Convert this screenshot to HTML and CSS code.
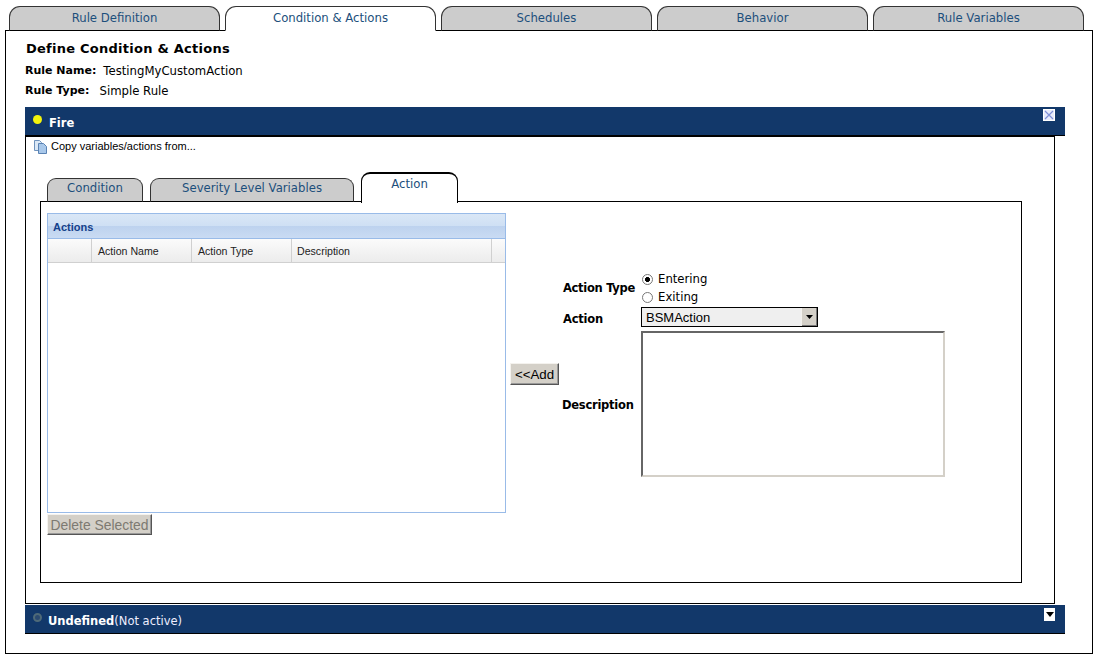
FILE: index.html
```html
<!DOCTYPE html>
<html lang="en">
<head>
<meta charset="utf-8">
<title>Define Condition &amp; Actions</title>
<link rel="stylesheet" href="styles.css">
</head>
<body>
<div class="page">
  <div class="tabs">
    <div class="tab">Rule Definition</div>
    <div class="tab active">Condition &amp; Actions</div>
    <div class="tab">Schedules</div>
    <div class="tab">Behavior</div>
    <div class="tab">Rule Variables</div>
  </div>
  <div class="frame">
    <h1 class="title">Define Condition &amp; Actions</h1>
    <div class="meta meta-name"><b>Rule Name:</b><span>TestingMyCustomAction</span></div>
    <div class="meta meta-type"><b>Rule Type:</b><span>Simple Rule</span></div>

    <div class="bar bar-fire">
      <span class="dot dot-on"></span>
      <span class="bar-title">Fire</span>
      <span class="bar-close">
        <svg width="12" height="12" viewBox="0 0 12 12"><rect width="12" height="12" fill="#e8ecfb"/><rect x=".5" y=".5" width="11" height="11" fill="none" stroke="#fff"/><path d="M2 2l8 8M10 2l-8 8" stroke="#7f8fd8" stroke-width="1.2" fill="none"/></svg>
      </span>
    </div>
    <div class="panel">
      <div class="copy">
        <svg width="15" height="15" viewBox="0 0 15 15"><path d="M1.500 1.500h5l2 2v8h-7z" fill="#dbe8f6" stroke="#6f93bd"/><path d="M5.500 4.500h5l3 3v7h-8z" fill="#a9c8ea" stroke="#5a83b4"/></svg>
        <span>Copy variables/actions from...</span>
      </div>
      <div class="subtabs">
        <div class="subtab st-cond">Condition</div>
        <div class="subtab st-sev">Severity Level Variables</div>
        <div class="subtab st-act active">Action</div>
      </div>
      <div class="subframe">
        <div class="left">
          <div class="grid">
            <div class="grid-title">Actions</div>
            <div class="grid-head">
              <div class="col c0"></div>
              <div class="col c1">Action Name</div>
              <div class="col c1">Action Type</div>
              <div class="col c2">Description</div>
              <div class="col c3"></div>
            </div>
          </div>
          <button class="btn btn-del" type="button" disabled>Delete Selected</button>
        </div>
        <div class="right">
          <button class="btn btn-add" type="button">&lt;&lt;Add</button>
          <div class="form">
            <div class="lbl lbl-type">Action Type</div>
            <div class="radios">
              <label class="radio"><input type="radio" name="t" checked>Entering</label>
              <label class="radio"><input type="radio" name="t">Exiting</label>
            </div>
            <div class="lbl lbl-action">Action</div>
            <div class="select">
              <span>BSMAction</span>
              <span class="arrow"><svg width="7" height="4" viewBox="0 0 7 4"><path d="M0 0h7L3.500 4z" fill="#000"/></svg></span>
            </div>
            <div class="lbl lbl-desc">Description</div>
            <textarea class="desc"></textarea>
          </div>
        </div>
      </div>
    </div>
    <div class="bar bar-undef">
      <span class="dot dot-off"></span>
      <span class="bar-title">Undefined</span><span class="bar-note">(Not active)</span>
      <span class="bar-open">
        <svg width="8" height="5" viewBox="0 0 8 5"><path d="M0 0h8L4 5z" fill="#000"/></svg>
      </span>
    </div>
  </div>
</div>
</body>
</html>
```
FILE: styles.css
```css
* { box-sizing: border-box; }
html, body { margin: 0; padding: 0; background: #fff; }
body { font-family: "DejaVu Sans", Verdana, sans-serif; color: #000; }
.page { width: 1095px; height: 658px; padding: 6px 0 0 5px; overflow: hidden; }

.tabs { display: flex; gap: 5px; height: 25px; padding-left: 4px; position: relative; z-index: 1; }
.tab {
  width: 211px; height: 25px;
  background: #ccc; border: 1px solid #333; border-bottom: 1px solid #000;
  border-radius: 11px 11px 0 0;
  color: #1c4f7c; font-size: 11.700px; line-height: 23px; text-align: center;
}
.tab.active { background: #fff; border-bottom-color: #fff; }

.frame {
  width: 1088px; height: 624px; margin-top: -1px;
  border: 1px solid #000; background: #fff;
  padding: 10px 0 0 19px;
}
.title { margin: 0 0 0 1px; font-size: 13px; line-height: 16px; font-weight: bold; letter-spacing: .25px; }
.meta { display: flex; font-size: 11.700px; line-height: 14px; }
.meta b { font-weight: bold; font-size: 11px; }
.meta-name { margin-top: 7px; gap: 7px; }
.meta-type { margin-top: 6px; gap: 10px; }

.bar { width: 1040px; background: #12386a; color: #fff; display: flex; align-items: flex-start; position: relative; }
.bar-fire { height: 29px; margin-top: 9px; border-bottom: 1px solid #000; }
.bar-undef { height: 29px; margin-top: 1px; border-bottom: 1px solid #000; }
.dot { width: 9px; height: 9px; border-radius: 50%; margin: 8px 7px 0 8px; flex: none; }
.dot-on { background: #f4f40c; }
.dot-off { background: #2b4a70; border: 2px solid #4f6a78; }
.bar-title { font-size: 11.500px; font-weight: bold; line-height: 29px; margin-top: 2px; }
.bar-undef .bar-title { margin: 2px 0 0 -1px; }
.bar-note { font-size: 11.500px; line-height: 29px; margin: 2px 0 0 0; color: #eef; }
.bar-close { position: absolute; left: 1018px; top: 2px; width: 12px; height: 12px; display: block; line-height: 0; }
.bar-open { position: absolute; left: 1019px; top: 3px; width: 11px; height: 13px; background: #fff; display: flex; align-items: center; justify-content: center; }

.panel { width: 1030px; height: 468px; border: 1px solid #000; background: #fff; padding: 2px 0 0 7px; }
.copy { display: flex; align-items: center; gap: 3px; height: 14px; font-family: "Liberation Sans", Arial, sans-serif; font-size: 11px; }
.subtabs { display: flex; align-items: flex-end; height: 30px; margin-top: 19px; padding-left: 14px; position: relative; z-index: 1; }
.subtab {
  height: 24px; background: #ccc; border: 1px solid #333; border-bottom: 1px solid #000;
  border-radius: 9px 9px 0 0; text-align: center;
  color: #1c4f7c; font-size: 11.700px; line-height: 19px;
}
.st-cond { width: 96px; }
.st-sev { width: 204px; margin-left: 7px; }
.st-act { width: 97px; height: 31px; margin-left: 7px; margin-bottom: -1px; background: #fff; border-bottom: 0; border-top: 2px solid #000; border-color: #000; line-height: 20px; }

.subframe {
  width: 982px; height: 382px; margin-left: 7px; margin-top: -1px;
  border: 1px solid #000; background: #fff;
  padding: 11px 0 0 6px; display: flex; align-items: flex-start; gap: 4px;
}
.left { width: 459px; flex: none; }
.grid { height: 300px; border: 1px solid #99bbe8; background: #fff; }
.grid-title {
  height: 25px; padding: 6px 0 0 5px;
  background: linear-gradient(#dae7f6 0, #cfe0f4 48%, #bdd2ee 50%, #c9dbf3 100%);
  border-bottom: 1px solid #99bbe8;
  color: #15428b; font: bold 11px/14px "Liberation Sans", Arial, sans-serif;
}
.grid-head { display: flex; height: 24px; background: linear-gradient(#fbfbfb, #ececec); border-bottom: 1px solid #d0d0d0; font: 10.600px/24px "Liberation Sans", Arial, sans-serif; color: #222; }
.col { border-right: 1px solid #d0d0d0; padding-left: 6px; flex: none; }
.c0 { width: 44px; }
.c1 { width: 100px; }
.c2 { width: 200px; padding-left: 5px; }
.c3 { width: 13px; border-right: 0; }

.btn {
  display: block; padding: 0; margin: 0; background: #d4d0c8;
  border: 1px solid; border-color: #f4f2ee #555 #555 #f4f2ee;
  box-shadow: inset -1px -1px 0 #999;
  font-family: "Liberation Sans", Arial, sans-serif; font-size: 13.300px; color: #000;
}
.btn-del { width: 105px; height: 21px; margin-top: 1px; color: #7d7a72; font-size: 13.900px; }
.btn-add { width: 49px; height: 22px; flex: none; margin-top: 2px; }

.right { display: flex; align-items: center; margin-top: 56px; }
.form { margin-left: 3px; display: grid; grid-template-columns: 79px 304px; align-items: center; }
.lbl { font-size: 11.500px; font-weight: bold; letter-spacing: -.2px; }
.lbl-type { padding: 1px 0 0 1px; letter-spacing: -.3px; }
.lbl-action { padding: 4px 0 0 1px; }
.lbl-desc { padding-top: 6px; letter-spacing: -.25px; }
.radios { display: flex; flex-direction: column; padding-top: 1px; }
.radio { display: flex; align-items: center; gap: 5px; height: 18px; font-size: 11.700px; padding-left: 1px; }
.radio input {
  appearance: none; width: 11px; height: 11px; margin: 0; flex: none;
  border: 1px solid #777; border-radius: 50%; background: #fff;
}
.radio input:checked { background: radial-gradient(circle, #000 0 2.200px, #fff 2.700px); }
.select {
  width: 177px; height: 20px; margin-top: 1px;
  border: 1px solid #000; background: #efefef;
  display: flex; align-items: center; justify-content: space-between;
  font: 13px "Liberation Sans", Arial, sans-serif; padding: 0 0 0 4px;
}
.arrow { width: 16px; height: 18px; background: #d4d0c8; border-left: 1px solid #f4f2ee; box-shadow: inset -1px -1px 0 #777; display: flex; align-items: center; justify-content: center; }
.desc {
  display: block; width: 304px; height: 146px; margin: 4px 0 0; padding: 0; resize: none;
  border: 2px solid; border-color: #666 #d4d0c8 #d4d0c8 #666; background: #fff; outline: 0;
}
```
